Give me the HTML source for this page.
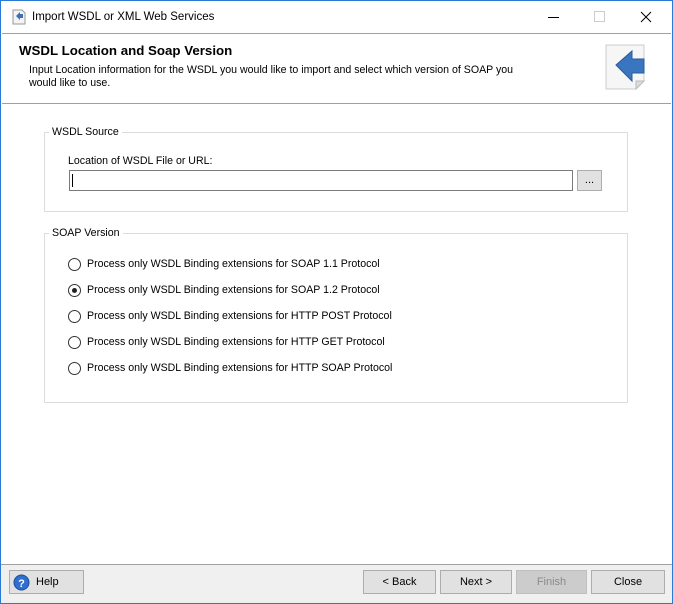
<!DOCTYPE html>
<html><head><style>
*{margin:0;padding:0;box-sizing:border-box}
body{width:673px;height:604px;position:relative;background:#fff;font-family:"Liberation Sans",sans-serif;font-size:10.6px;color:#000;overflow:hidden}
.abs{position:absolute}
.win{position:absolute;left:0;top:0;width:673px;height:604px;border:1px solid #2b79d7}
.btn{position:absolute;background:#e1e1e1;border:1px solid #adadad;text-align:center;line-height:23px;font-size:11px}
.radio{position:absolute;left:68px;width:13px;height:13px;border:1px solid #333;border-radius:50%;background:#fff}
.rl{position:absolute;left:87px;line-height:13px}
.grp{position:absolute;border:1px solid #dcdcdc}
.gl{position:absolute;background:#fff;padding:0 3px;line-height:13px}
</style></head><body>
<div class="win"></div>
<svg class="abs" style="left:11px;top:9px" width="16" height="16"><path d="M2 1h9l3 3v11H2z" fill="#f4f4f4" stroke="#999"/><path d="M5 7l4-4v2h3v4H9v2z" fill="#3d6fb5"/></svg>
<div class="abs" style="left:32px;top:11px;font-size:11.5px">Import WSDL or XML Web Services</div>
<div class="abs" style="left:548px;top:17px;width:11px;height:1px;background:#000"></div>
<div class="abs" style="left:594px;top:11px;width:11px;height:11px;border:1px solid #ccc"></div>
<svg class="abs" style="left:640px;top:11px" width="12" height="12"><path d="M1 1L11 11M11 1L1 11" stroke="#000" stroke-width="1"/></svg>
<div class="abs" style="left:2px;top:33px;width:669px;height:71px;border-top:1px solid #a0a0a0;border-bottom:1px solid #a0a0a0;background:#fff"></div>
<div class="abs" style="left:19px;top:43px;font-size:13.3px;font-weight:bold">WSDL Location and Soap Version</div>
<div class="abs" style="left:29px;top:64px;width:510px;line-height:13px;font-size:10.6px">Input Location information for the WSDL you would like to import and select which version of SOAP you would like to use.</div>
<svg class="abs" style="left:604px;top:43px" width="46" height="48"><path d="M2 2h38v36l-8 8H2z" fill="#f6f6f6" stroke="#ccc"/><path d="M32 46l8-8h-8z" fill="#ddd" stroke="#bbb"/><path d="M12 22l16-14v8h12v14H28v8z" fill="#3a76c0" stroke="#2a5a9a"/></svg>
<div class="grp" style="left:44px;top:132px;width:584px;height:80px"></div>
<div class="gl" style="left:49px;top:126px">WSDL Source</div>
<div class="abs" style="left:68px;top:155px">Location of WSDL File or URL:</div>
<div class="abs" style="left:69px;top:170px;width:504px;height:21px;border:1px solid #7a7a7a;background:#fff"></div>
<div class="abs" style="left:72px;top:174px;width:1px;height:13px;background:#000"></div>
<div class="btn" style="left:577px;top:170px;width:25px;height:21px;line-height:18px">...</div>
<div class="grp" style="left:44px;top:233px;width:584px;height:170px"></div>
<div class="gl" style="left:49px;top:227px">SOAP Version</div>
<div class="radio" style="top:258px"></div><div class="rl" style="top:258px">Process only WSDL Binding extensions for SOAP 1.1 Protocol</div>
<div class="radio" style="top:284px"></div><div class="abs" style="left:72px;top:288px;width:5px;height:5px;border-radius:50%;background:#222"></div><div class="rl" style="top:284px">Process only WSDL Binding extensions for SOAP 1.2 Protocol</div>
<div class="radio" style="top:310px"></div><div class="rl" style="top:310px">Process only WSDL Binding extensions for HTTP POST Protocol</div>
<div class="radio" style="top:336px"></div><div class="rl" style="top:336px">Process only WSDL Binding extensions for HTTP GET Protocol</div>
<div class="radio" style="top:362px"></div><div class="rl" style="top:362px">Process only WSDL Binding extensions for HTTP SOAP Protocol</div>
<div class="abs" style="left:1px;top:564px;width:671px;height:39px;background:#f0f0f0;border-top:1px solid #a0a0a0"></div>
<div class="btn" style="left:9px;top:570px;width:75px;height:24px;text-align:left;padding-left:26px">Help</div>
<svg class="abs" style="left:13px;top:574px" width="17" height="17"><circle cx="8.5" cy="8.5" r="7.5" fill="#2f6fcf" stroke="#1a4d9a"/><text x="8.5" y="13" font-family="Liberation Sans" font-size="11" font-weight="bold" fill="#fff" text-anchor="middle">?</text></svg>
<div class="btn" style="left:363px;top:570px;width:73px;height:24px">&lt; Back</div>
<div class="btn" style="left:440px;top:570px;width:72px;height:24px">Next &gt;</div>
<div class="btn" style="left:516px;top:570px;width:71px;height:24px;background:#cccccc;border-color:#bfbfbf;color:#8a8a8a">Finish</div>
<div class="btn" style="left:591px;top:570px;width:74px;height:24px">Close</div>
</body></html>
